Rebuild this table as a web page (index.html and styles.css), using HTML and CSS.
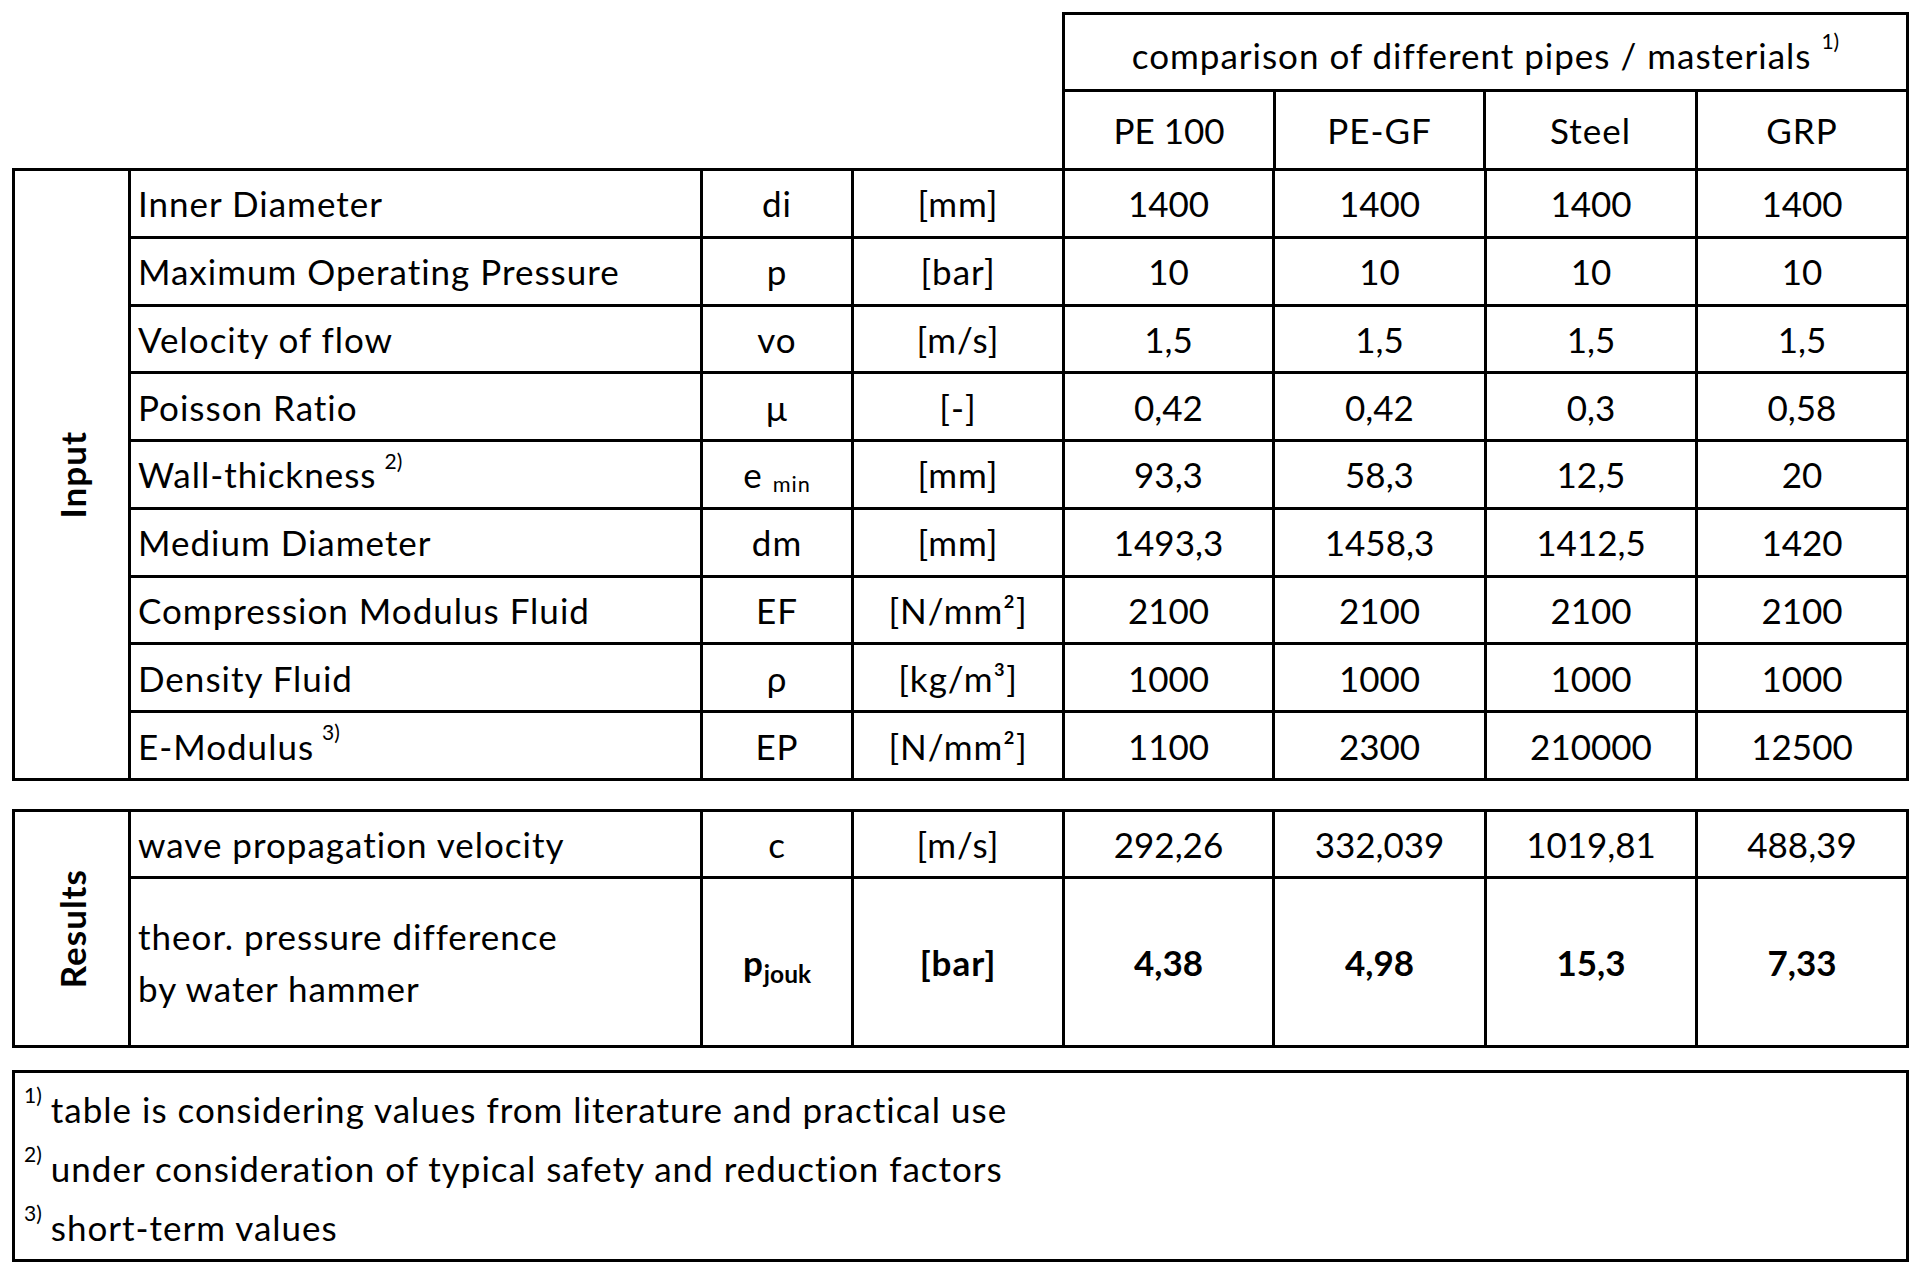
FILE: index.html
```html
<!DOCTYPE html>
<html lang="en">
<head>
<meta charset="utf-8">
<title>Pipe comparison</title>
<link rel="stylesheet" href="styles.css">
</head>
<body>
<div class="page">
  <div class="head-row">
    <div class="head-spacer"></div>
    <div class="head-grid">
      <div class="cell title txt"><span>comparison of different pipes / masterials <sup>1)</sup></span></div>
      <div class="cell">PE 100</div>
      <div class="cell txt">PE-GF</div>
      <div class="cell txt">Steel</div>
      <div class="cell txt">GRP</div>
    </div>
  </div>

  <div class="grid input-grid">
    <div class="cell label"><span class="vlabel">Input</span></div>

    <div class="cell desc">Inner Diameter</div><div class="cell txt">di</div><div class="cell txt">[mm]</div>
    <div class="cell">1400</div><div class="cell">1400</div><div class="cell">1400</div><div class="cell">1400</div>

    <div class="cell desc">Maximum Operating Pressure</div><div class="cell txt">p</div><div class="cell txt">[bar]</div>
    <div class="cell">10</div><div class="cell">10</div><div class="cell">10</div><div class="cell">10</div>

    <div class="cell desc">Velocity of flow</div><div class="cell txt">vo</div><div class="cell txt">[m/s]</div>
    <div class="cell">1,5</div><div class="cell">1,5</div><div class="cell">1,5</div><div class="cell">1,5</div>

    <div class="cell desc">Poisson Ratio</div><div class="cell txt">µ</div><div class="cell txt">[-]</div>
    <div class="cell">0,42</div><div class="cell">0,42</div><div class="cell">0,3</div><div class="cell">0,58</div>

    <div class="cell desc"><span>Wall-thickness<sup class="gap">2)</sup></span></div><div class="cell txt"><span>e <sub>min</sub></span></div><div class="cell txt">[mm]</div>
    <div class="cell">93,3</div><div class="cell">58,3</div><div class="cell">12,5</div><div class="cell">20</div>

    <div class="cell desc">Medium Diameter</div><div class="cell txt">dm</div><div class="cell txt">[mm]</div>
    <div class="cell">1493,3</div><div class="cell">1458,3</div><div class="cell">1412,5</div><div class="cell">1420</div>

    <div class="cell desc">Compression Modulus Fluid</div><div class="cell txt">EF</div><div class="cell txt">[N/mm²]</div>
    <div class="cell">2100</div><div class="cell">2100</div><div class="cell">2100</div><div class="cell">2100</div>

    <div class="cell desc">Density Fluid</div><div class="cell txt">ρ</div><div class="cell txt">[kg/m³]</div>
    <div class="cell">1000</div><div class="cell">1000</div><div class="cell">1000</div><div class="cell">1000</div>

    <div class="cell desc"><span>E-Modulus<sup class="gap">3)</sup></span></div><div class="cell txt">EP</div><div class="cell txt">[N/mm²]</div>
    <div class="cell">1100</div><div class="cell">2300</div><div class="cell">210000</div><div class="cell">12500</div>
  </div>

  <div class="grid results-grid">
    <div class="cell label"><span class="vlabel">Results</span></div>

    <div class="cell desc">wave propagation velocity</div><div class="cell txt">c</div><div class="cell txt">[m/s]</div>
    <div class="cell">292,26</div><div class="cell">332,039</div><div class="cell">1019,81</div><div class="cell">488,39</div>

    <div class="cell desc two-line"><span>theor. pressure difference<br>by water hammer</span></div>
    <div class="cell bold txt"><span>p<sub class="jouk">jouk</sub></span></div><div class="cell bold txt">[bar]</div>
    <div class="cell bold">4,38</div><div class="cell bold">4,98</div><div class="cell bold">15,3</div><div class="cell bold">7,33</div>
  </div>

  <div class="notes">
    <p class="note"><sup>1)</sup>table is considering values from literature and practical use</p>
    <p class="note"><sup>2)</sup>under consideration of typical safety and reduction factors</p>
    <p class="note"><sup>3)</sup>short-term values</p>
  </div>
</div>
</body>
</html>
```

FILE: styles.css
```css
html, body {
  margin: 0;
  padding: 0;
  background: #ffffff;
}

body {
  font-family: Lato, "Liberation Sans", sans-serif;
  color: #000000;
}

.page {
  width: 1897px;
  padding: 12px 0 0 12px;
}

.head-row {
  display: flex;
}

.head-spacer {
  flex: none;
  width: 1050px;
}

.head-grid {
  display: grid;
  grid-template-columns: 208px 207px 209px 208px;
  grid-template-rows: 74px 76px;
  gap: 3px;
  padding: 3px 3px 0 3px;
  background: #000000;
}

.cell {
  background: #ffffff;
  display: flex;
  align-items: center;
  justify-content: center;
  font-size: 35px;
  line-height: 1.2;
  white-space: nowrap;
}

.txt {
  letter-spacing: 1px;
}

.title {
  grid-column: 1 / -1;
  padding-top: 6px;
}

.grid {
  display: grid;
  grid-template-columns: 113px 569px 148px 208px 207px 209px 208px 208px;
  gap: 3px;
  padding: 3px;
  background: #000000;
}

.input-grid {
  grid-template-rows: repeat(9, 64.78px);
}

.results-grid {
  margin-top: 28px;
  grid-template-rows: 64px 166px;
}

.label {
  grid-row: span 9;
}

.results-grid .label {
  grid-row: span 2;
}

.vlabel {
  writing-mode: vertical-rl;
  transform: rotate(180deg);
  font-weight: 700;
  font-size: 35px;
  letter-spacing: 1px;
}

.desc {
  justify-content: flex-start;
  padding-left: 7px;
  letter-spacing: 1px;
}

.two-line {
  line-height: 52px;
}

.bold {
  font-weight: 700;
}

sup {
  font-size: 0.6em;
  line-height: 0;
  vertical-align: 0.95em;
  letter-spacing: 0;
}

sup.gap {
  margin-left: 8px;
}

sub {
  font-size: 0.62em;
  line-height: 0;
  vertical-align: -0.2em;
}

.jouk {
  font-size: 0.7em;
  vertical-align: -0.3em;
  letter-spacing: 0;
}

.notes {
  margin-top: 22px;
  height: 179px;
  border: 3px solid #000000;
  padding: 7px 0 0 9px;
}

.note {
  margin: 0;
  font-size: 35px;
  line-height: 59px;
  letter-spacing: 1px;
}

.note sup {
  margin-right: 9px;
}
```
